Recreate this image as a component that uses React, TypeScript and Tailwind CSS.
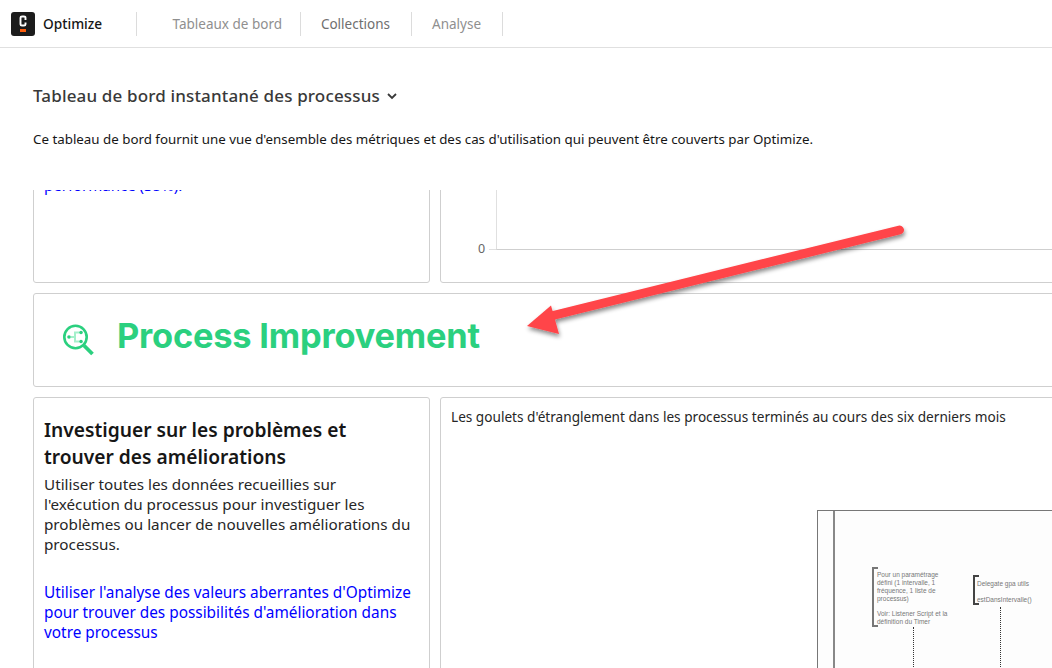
import React from "react";

const font = { fontFamily: '"Noto Sans", sans-serif' };

function Logo() {
  return (
    <div className="flex h-6 w-6 items-center justify-center rounded-[3px] bg-[#1c1c1c]">
      <svg width="12" height="18" viewBox="0 0 12 18" fill="none">
        <path d="M8.500 5 V2.800 Q8.500 1.500 7 1.500 H5 Q3.500 1.500 3.500 2.800 V9.200 Q3.500 10.500 5 10.500 H7 Q8.500 10.500 8.500 9.200 V7.500" stroke="#fff" strokeWidth="1.900" />
        <rect x="3" y="14" width="6" height="3" fill="#fc5d0d" />
      </svg>
    </div>
  );
}

function NavLink({ label, color, width }: { label: string; color: string; width: string }) {
  return (
    <div className={`flex h-6 items-center justify-end border-r border-[#dcdcdc] pt-[2px] text-[13.5px] ${color} ${width}`}>
      {label}
    </div>
  );
}

function ProcessIcon() {
  return (
    <svg width="36" height="36" viewBox="0 0 36 36" fill="none">
      <circle cx="15.500" cy="15" r="11.200" stroke="#2bd07f" strokeWidth="2.600" />
      <path d="M24 23.500 L32.500 32" stroke="#2bd07f" strokeWidth="3.800" />
      <circle cx="9" cy="15" r="1.800" fill="#2bd07f" />
      <circle cx="21" cy="10.500" r="1.800" fill="#2bd07f" />
      <circle cx="21" cy="19.500" r="1.800" fill="#2bd07f" />
      <path d="M11 15 H15 M19 10.500 H15 V19.500 H19" stroke="#a5f0cb" strokeWidth="2" />
    </svg>
  );
}

function Arrow() {
  return (
    <svg className="pointer-events-none absolute left-[520px] top-[220px]" width="400" height="130" viewBox="0 0 400 130" fill="none">
      <defs>
        <filter id="arrow-shadow" x="-10%" y="-30%" width="120%" height="170%">
          <feDropShadow dx="1" dy="3" stdDeviation="2" floodColor="#000" floodOpacity="0.45" />
        </filter>
      </defs>
      <g filter="url(#arrow-shadow)">
        <path d="M31 96 L379.500 10" stroke="#ff4548" strokeWidth="9" strokeLinecap="round" />
        <path d="M7 106 L31 85.500 L39 114 Z" fill="#ff4548" />
      </g>
    </svg>
  );
}

function SequenceDiagram() {
  return (
    <div className="absolute left-[376px] top-[112px] h-[200px] w-[300px] border-l border-t border-[#777] bg-[#fdfdfd]">
      <div className="absolute left-[15px] top-0 h-full w-[2px] bg-[#888]" />
      <div className="absolute left-[54px] top-[56px] h-[60px] w-[6px] border-y-2 border-l-2 border-[#777]" />
      <div className="absolute left-[59px] top-[60px] w-[76px] text-[6.500px] leading-[8px] text-[#777] [font-family:'Liberation_Sans',sans-serif]">
        <p>Pour un paramétrage défini (1 intervalle, 1 fréquence, 1 liste de processus)</p>
        <p className="mt-[7px]">Voir: Listener Script et la définition du Timer</p>
      </div>
      <div className="absolute left-[155px] top-[64px] h-[30px] w-[6px] border-y-2 border-l-2 border-[#444]" />
      <div className="absolute left-[159px] top-[69px] w-[70px] text-[6.500px] leading-[8px] text-[#777] [font-family:'Liberation_Sans',sans-serif]">
        <p>Delegate gpa utils</p>
        <p className="mt-[8px]">estDansIntervalle()</p>
      </div>
      <div className="absolute left-[95px] top-[116px] h-[50px] border-l border-dotted border-[#333]" />
      <div className="absolute left-[182px] top-[96px] h-[70px] border-l border-dotted border-[#333]" />
    </div>
  );
}

export default function App() {
  return (
    <div className="relative flex h-screen w-full flex-col overflow-hidden bg-white text-[#161616]" style={font}>
      <nav className="flex h-[48px] shrink-0 items-center border-b border-[#e0e0e0] pl-[11px]">
        <Logo />
        <span className="ml-2 w-[93px] pt-[1px] text-[13.700px] font-medium">Optimize</span>
        <div className="h-6 border-l border-[#dcdcdc]" />
        <NavLink label="Tableaux de bord" color="pr-[18px] text-[#8f8f8f]" width="w-[164px]" />
        <NavLink label="Collections" color="pr-[21px] text-[#6f6f6f]" width="w-[111px]" />
        <NavLink label="Analyse" color="pr-[21px] text-[#8f8f8f]" width="w-[91px]" />
      </nav>

      <header className="h-[142px] shrink-0 pl-[33px]">
        <h1 className="mt-[36px] flex h-6 items-center gap-[6px] text-[17px] font-medium leading-6 tracking-[0.15px] text-[#393939]">
          Tableau de bord instantané des processus
          <svg width="12" height="12" viewBox="0 0 12 12" fill="none">
            <path d="M2 4 L6 8 L10 4" stroke="#393939" strokeWidth="1.800" />
          </svg>
        </h1>
        <p className="mt-[21px] text-[13.340px] leading-[20px]">
          Ce tableau de bord fournit une vue d'ensemble des métriques et des cas d'utilisation qui peuvent être couverts par Optimize.
        </p>
      </header>

      <main className="flex-1 overflow-hidden pl-[33px]">
        <div className="-mt-[107px] grid w-[1100px] grid-cols-[397px_1fr] gap-[10px]">
          <div className="h-[200px] rounded-[3px] border border-[#cfcfcf] px-[10px] pt-[91px] text-[15px] leading-5 text-[#0000ff]">
            performance (35%).
          </div>
          <div className="flex h-[200px] items-start rounded-[3px] border border-[#cfcfcf] pl-[37px]">
            <span className="mt-[157px] w-[11px] text-[12.500px] leading-4 text-[#666]">0</span>
            <div className="mt-[165px] h-px w-[7px] bg-[#e0e0e0]" />
            <div className="h-[166px] flex-1 border-b border-l border-b-[#cfcfcf] border-l-[#e0e0e0]" />
          </div>

          <div className="col-span-2 flex h-[94px] items-center rounded-[3px] border border-[#cfcfcf] pl-[26px]">
            <ProcessIcon />
            <span className="mb-[8px] ml-[21px] text-[34.400px] font-bold tracking-[-0.2px] text-[#2bd07f] [font-family:Inter,sans-serif]">
              Process Improvement
            </span>
          </div>

          <div className="h-[400px] rounded-[3px] border border-[#cfcfcf] px-[10px] pt-[18px]">
            <h2 className="text-[19.200px] font-semibold leading-[27px]">
              Investiguer sur les problèmes et
              <br />
              trouver des améliorations
            </h2>
            <p className="mt-[4px] text-[15.240px] leading-5 text-[#262626]">
              Utiliser toutes les données recueillies sur
              <br />
              l'exécution du processus pour investiguer les
              <br />
              problèmes ou lancer de nouvelles améliorations du
              <br />
              processus.
            </p>
            <p className="mt-[29px] text-[15.360px] leading-5 text-[#0000ff]">
              Utiliser l'analyse des valeurs aberrantes d'Optimize
              <br />
              pour trouver des possibilités d'amélioration dans
              <br />
              votre processus
            </p>
          </div>
          <div className="relative h-[400px] rounded-[3px] border border-[#cfcfcf] px-[10px] pt-[9px]">
            <p className="text-[13.620px] leading-5 text-[#262626]">
              Les goulets d'étranglement dans les processus terminés au cours des six derniers mois
            </p>
            <SequenceDiagram />
          </div>
        </div>
      </main>

      <Arrow />
    </div>
  );
}
